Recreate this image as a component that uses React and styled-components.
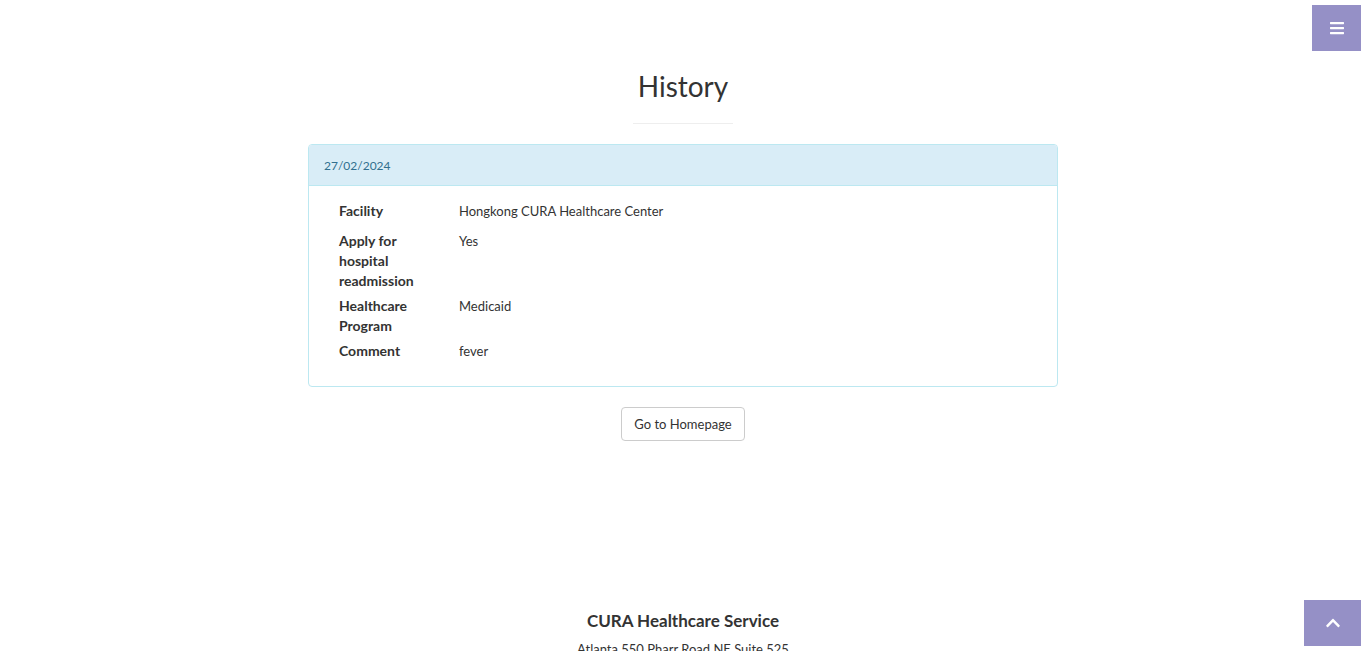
import React from "react";
import styled, { createGlobalStyle } from "styled-components";
import { FaBars, FaChevronUp } from "react-icons/fa";

const GlobalStyle = createGlobalStyle`
  html, body {
    margin: 0;
    padding: 0;
    background: #fff;
  }
  body {
    font-family: "Lato", "Liberation Sans", sans-serif;
    font-size: 13px;
    line-height: 20px;
    color: #333;
  }
  * {
    box-sizing: border-box;
  }
`;

const Page = styled.div`
  height: 651px;
  overflow: hidden;
  position: relative;
`;

const MenuToggle = styled.a`
  position: fixed;
  top: 5px;
  right: 5px;
  width: 49px;
  height: 46px;
  background: #9590c6;
  color: #fff;
  display: flex;
  align-items: center;
  justify-content: center;
  font-size: 16px;
`;

const ToTop = styled.a`
  position: fixed;
  right: 5px;
  bottom: 5px;
  width: 57px;
  height: 46px;
  background: #9590c6;
  color: #fff;
  display: flex;
  align-items: center;
  justify-content: center;
  font-size: 16px;
`;

const Section = styled.section`
  width: 750px;
  margin: 0 auto;
  padding-top: 67px;
  display: flex;
  flex-direction: column;
  align-items: center;
`;

const Title = styled.h2`
  margin: 0;
  font-size: 28px;
  line-height: 38px;
  font-weight: 400;
  color: #333;
`;

const Rule = styled.hr`
  width: 100px;
  margin: 18px 0 20px;
  border: 0;
  border-top: 1px solid #eee;
`;

const Panel = styled.div`
  width: 100%;
  border: 1px solid #bce8f1;
  border-radius: 4px;
  overflow: hidden;
`;

const PanelHeading = styled.div`
  background: #d9edf7;
  border-bottom: 1px solid #bce8f1;
  color: #31708f;
  padding: 11px 15px 8px;
  font-size: 12px;
  height: 41px;
  line-height: 20px;
`;

const PanelBody = styled.div`
  padding: 15px 30px 25px;
  display: flex;
  flex-direction: column;
`;

const Row = styled.div`
  display: grid;
  grid-template-columns: 120px 1fr;
  margin-bottom: ${(p) => p.$gap}px;
  &:last-child {
    margin-bottom: 0;
  }
`;

const Label = styled.div`
  font-weight: 700;
  font-size: 14px;
  width: 90px;
`;

const Value = styled.div``;

const Button = styled.a`
  margin-top: 20px;
  display: inline-block;
  padding: 6px 12px;
  height: 34px;
  border: 1px solid #ccc;
  border-radius: 4px;
  background: #fff;
  color: #333;
  font-size: 13px;
  line-height: 20px;
`;

const Footer = styled.footer`
  margin-top: 168px;
  text-align: center;
`;

const FooterTitle = styled.h4`
  margin: 0 0 6px;
  font-size: 17px;
  line-height: 24px;
  font-weight: 700;
`;

const FooterLine = styled.p`
  margin: 0;
`;

const rows = [
  { label: "Facility", value: "Hongkong CURA Healthcare Center", gap: 10 },
  { label: "Apply for hospital readmission", value: "Yes", gap: 5 },
  { label: "Healthcare Program", value: "Medicaid", gap: 5 },
  { label: "Comment", value: "fever", gap: 0 },
];

export default function App() {
  return (
    <Page>
      <GlobalStyle />
      <MenuToggle>
        <FaBars />
      </MenuToggle>
      <Section>
        <Title>History</Title>
        <Rule />
        <Panel>
          <PanelHeading>27/02/2024</PanelHeading>
          <PanelBody>
            {rows.map((r) => (
              <Row key={r.label} $gap={r.gap}>
                <Label>{r.label}</Label>
                <Value>{r.value}</Value>
              </Row>
            ))}
          </PanelBody>
        </Panel>
        <Button>Go to Homepage</Button>
      </Section>
      <Footer>
        <FooterTitle>CURA Healthcare Service</FooterTitle>
        <FooterLine>Atlanta 550 Pharr Road NE Suite 525</FooterLine>
      </Footer>
      <ToTop>
        <FaChevronUp />
      </ToTop>
    </Page>
  );
}
